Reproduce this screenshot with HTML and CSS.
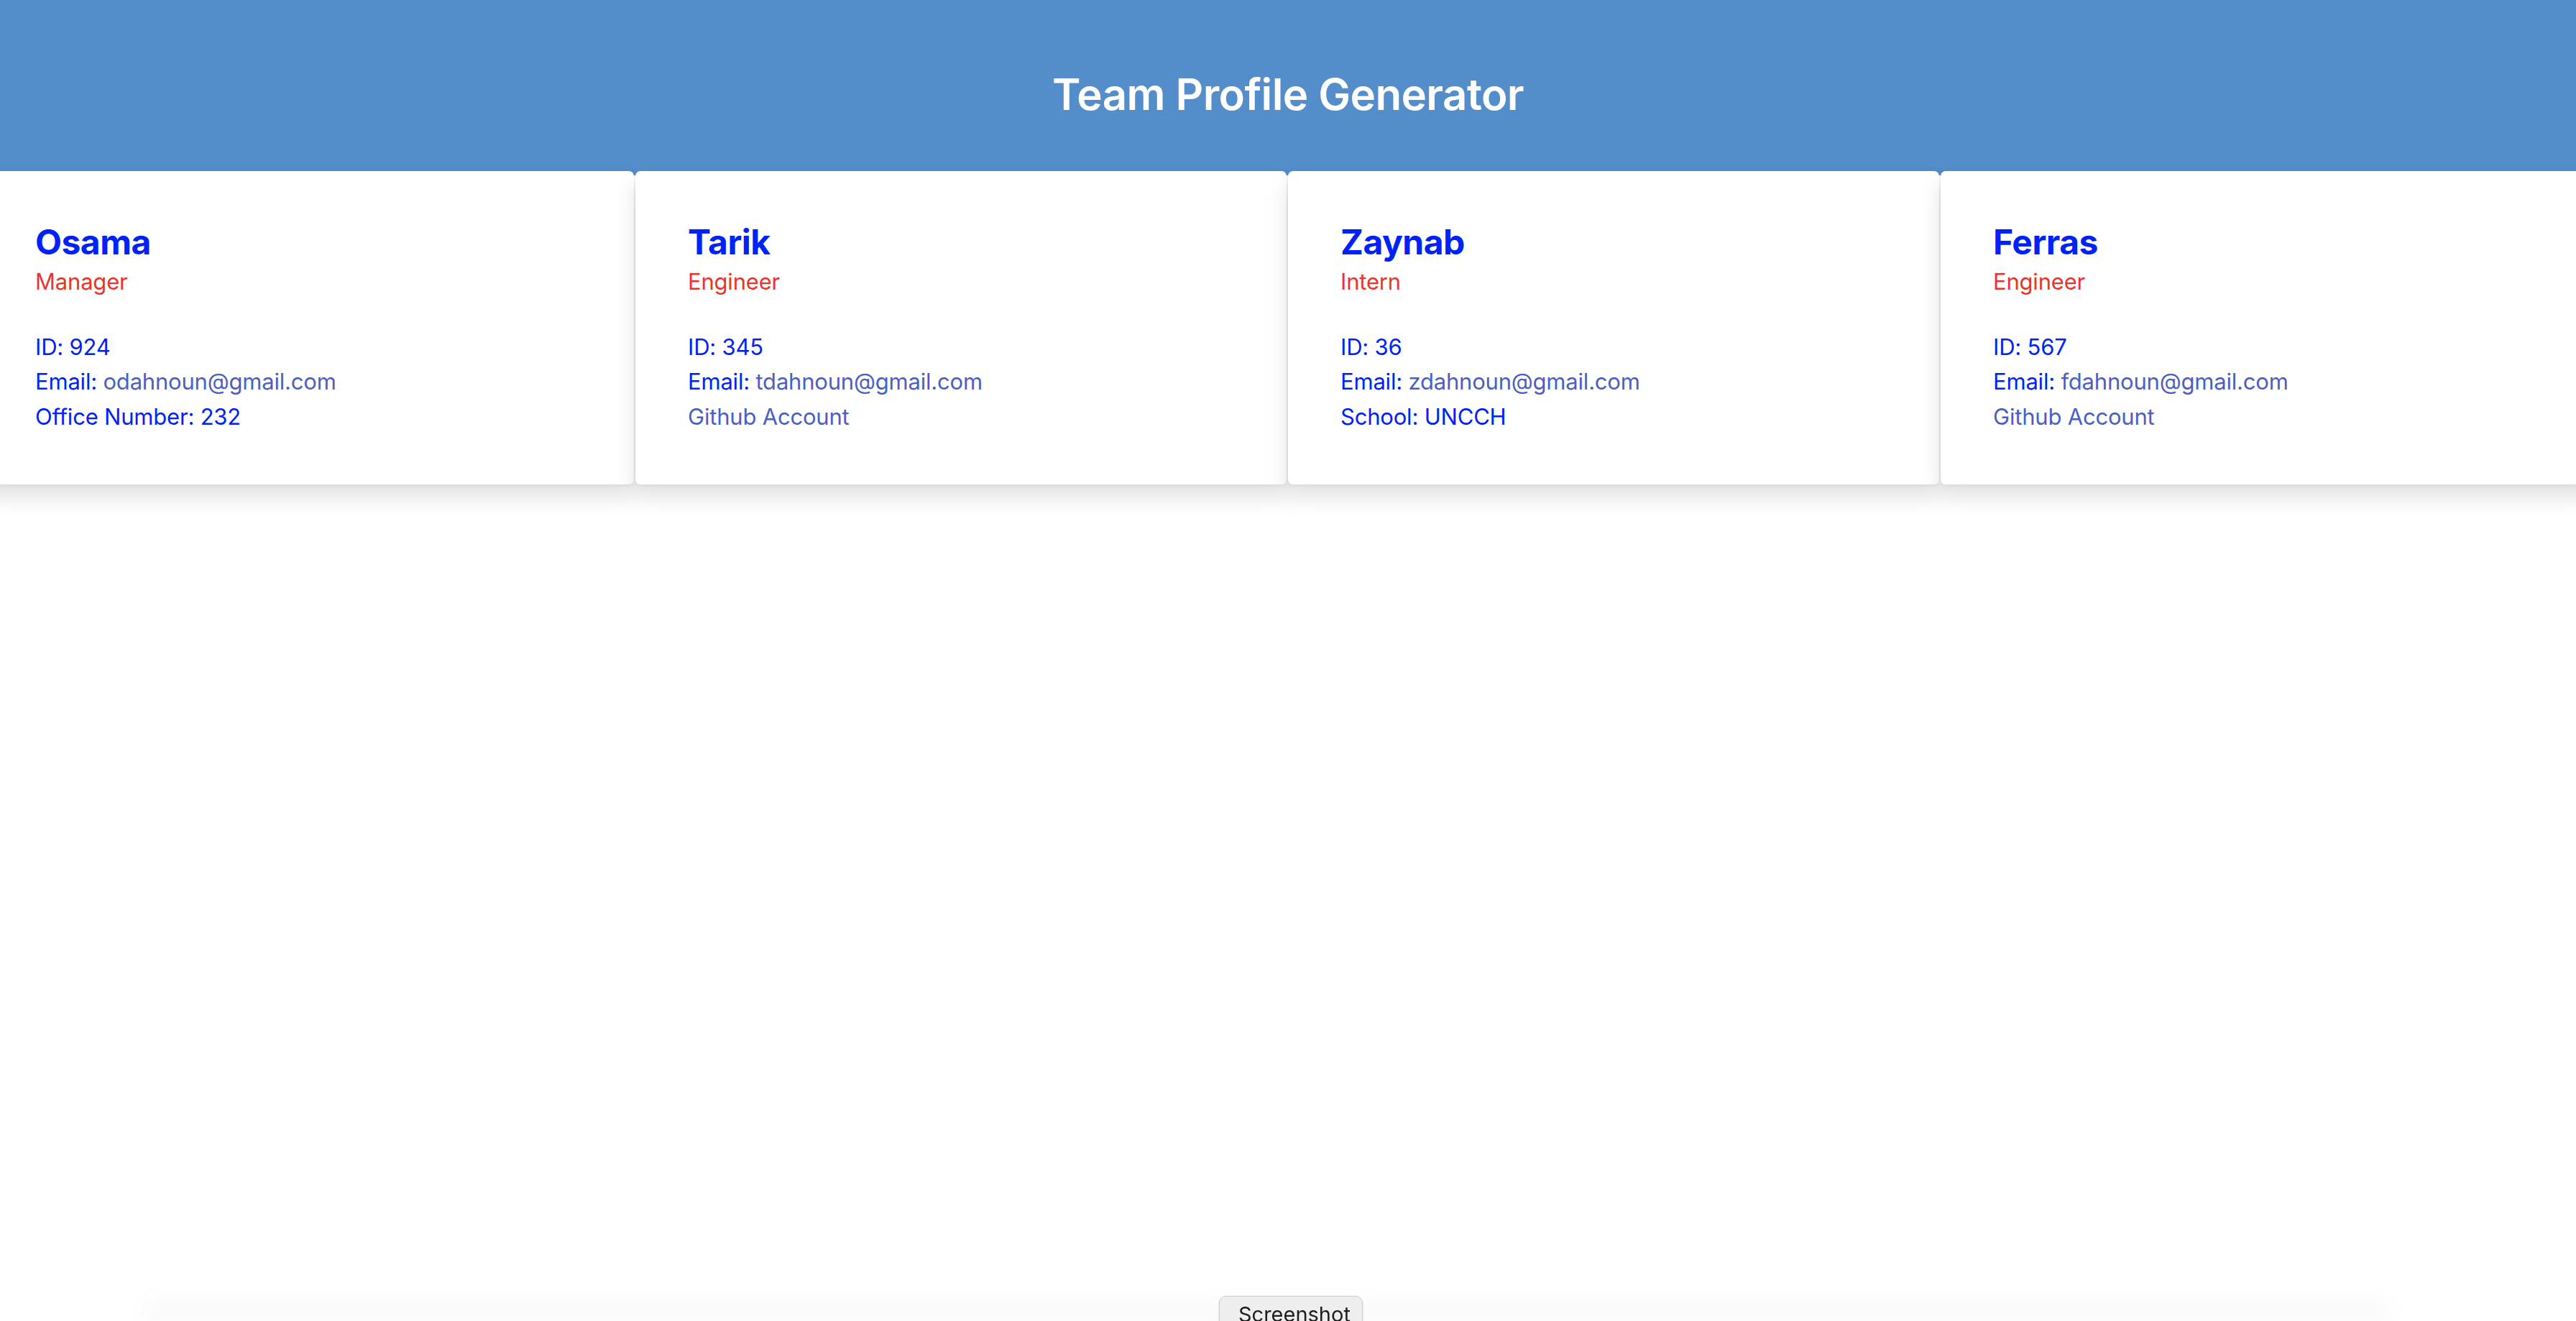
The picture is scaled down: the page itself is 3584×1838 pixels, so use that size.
FILE: index.html
```html
<!DOCTYPE html>
<html lang="en">
<head>
<meta charset="utf-8">
<title>Team Profile Generator</title>
<link rel="stylesheet" href="styles.css">
</head>
<body>
<header class="banner">
  <h1 class="banner-title">Team Profile Generator</h1>
</header>
<main class="team">
  <section class="card">
    <h2 class="card-name">Osama</h2>
    <div class="card-role">Manager</div>
    <ul class="card-info">
      <li>ID: 924</li>
      <li>Email: <a class="card-link" href="#">odahnoun@gmail.com</a></li>
      <li>Office Number: 232</li>
    </ul>
  </section>
  <section class="card">
    <h2 class="card-name">Tarik</h2>
    <div class="card-role">Engineer</div>
    <ul class="card-info">
      <li>ID: 345</li>
      <li>Email: <a class="card-link" href="#">tdahnoun@gmail.com</a></li>
      <li><a class="card-link" href="#">Github Account</a></li>
    </ul>
  </section>
  <section class="card">
    <h2 class="card-name">Zaynab</h2>
    <div class="card-role">Intern</div>
    <ul class="card-info">
      <li>ID: 36</li>
      <li>Email: <a class="card-link" href="#">zdahnoun@gmail.com</a></li>
      <li>School: UNCCH</li>
    </ul>
  </section>
  <section class="card">
    <h2 class="card-name">Ferras</h2>
    <div class="card-role">Engineer</div>
    <ul class="card-info">
      <li>ID: 567</li>
      <li>Email: <a class="card-link" href="#">fdahnoun@gmail.com</a></li>
      <li><a class="card-link" href="#">Github Account</a></li>
    </ul>
  </section>
</main>
<div class="bottom-shade"></div>
<button class="shot-button" type="button">Screenshot</button>
</body>
</html>
```
FILE: styles.css
```css
html {
  overflow: hidden;
  background: #ffffff;
}

body {
  margin: 0;
  padding: 0;
  min-height: 100vh;
  font-family: Inter, "Noto Sans", "Liberation Sans", sans-serif;
}

.banner {
  background: #538ecb;
  height: 244px;
  box-sizing: border-box;
  padding-top: 95px;
}

.banner-title {
  margin: 0;
  text-align: center;
  color: #ffffff;
  font-size: 60px;
  line-height: 72px;
  font-weight: 600;
  letter-spacing: -0.6px;
}

.team {
  display: flex;
  gap: 2px;
  margin-top: -6px;
  margin-left: -24px;
  width: 3700px;
  padding-bottom: 80px;
}

.card {
  flex: 0 0 906px;
  box-sizing: border-box;
  background: #ffffff;
  border-radius: 7px;
  padding: 70px 73px 70px;
  box-shadow: 0 18px 30px rgba(0, 0, 0, 0.12), 0 2px 6px rgba(0, 0, 0, 0.05);
}

.card-name {
  margin: 0;
  font-size: 48px;
  line-height: 58px;
  font-weight: 700;
  color: #0022f5;
  letter-spacing: -0.5px;
}

.card-role {
  margin-top: 2px;
  font-size: 31px;
  line-height: 48px;
  color: #e8352a;
  letter-spacing: -0.2px;
}

.card-info {
  list-style: none;
  margin: 43px 0 0;
  padding: 0;
  font-size: 31px;
  line-height: 48.3px;
  color: #0022f5;
  letter-spacing: -0.2px;
}

.card-link {
  color: #4b5fc2;
  text-decoration: none;
}

.bottom-shade {
  position: fixed;
  left: 200px;
  right: 260px;
  bottom: 0;
  height: 40px;
  background: linear-gradient(to bottom, rgba(0, 0, 0, 0), rgba(0, 0, 0, 0.03));
  filter: blur(12px);
}

.shot-button {
  position: fixed;
  left: 1696px;
  top: 1803px;
  display: block;
  width: 200px;
  box-sizing: border-box;
  margin: 0;
  padding: 7px 0 20px 26px;
  text-align: left;
  border: 1px solid #cdcdcd;
  border-radius: 10px;
  background: #eeeeee;
  color: #1e1e1e;
  font-family: Inter, "Noto Sans", "Liberation Sans", sans-serif;
  font-size: 29px;
  line-height: 36px;
  box-shadow: 0 1px 3px rgba(0, 0, 0, 0.12);
}
```
